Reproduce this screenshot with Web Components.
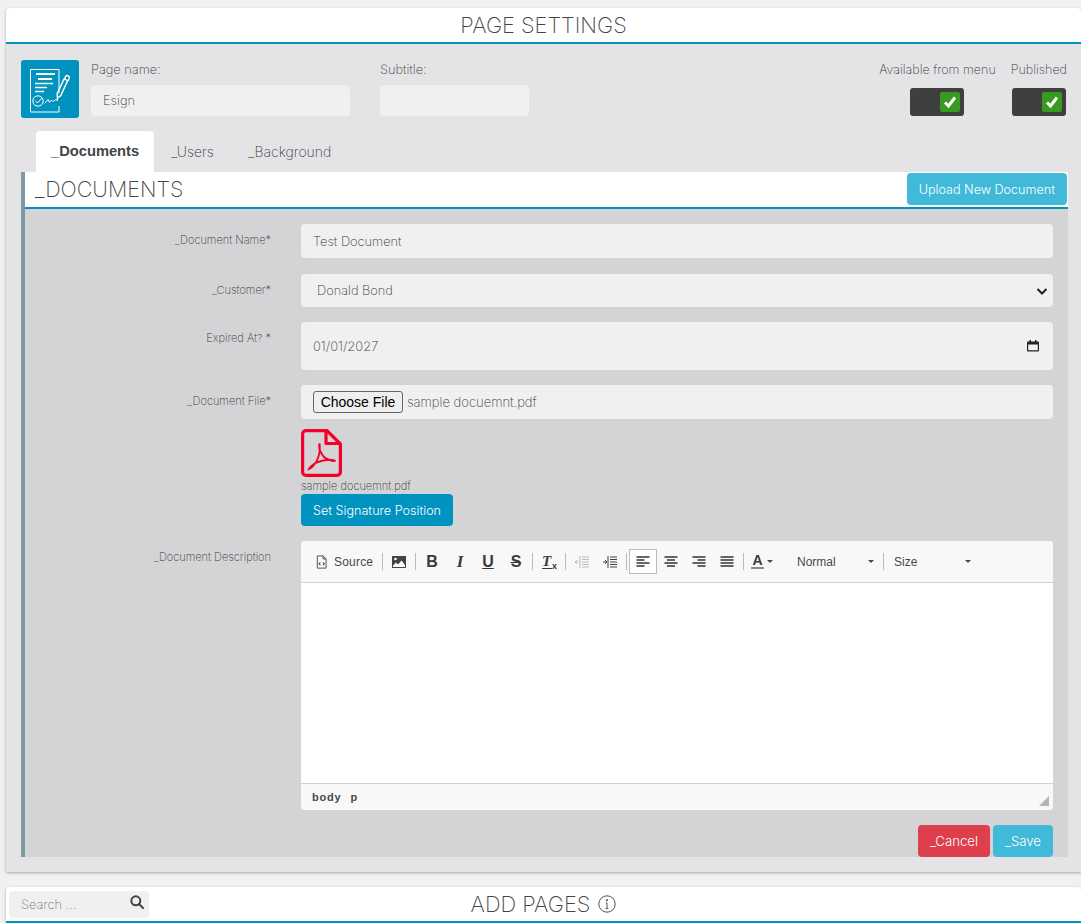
<!DOCTYPE html>
<html lang="en">
<head>
<meta charset="utf-8">
<title>Page Settings</title>
<style>
  html, body { margin: 0; height: 923px; overflow: hidden; background: #f1f1f1; }
  body {
    padding: 8px 0 0 6px;
    box-sizing: border-box;
    font-family: Inter, "Liberation Sans", sans-serif;
    font-weight: 250;
    color: #3a3a3a;
    font-size: 12.8px;
  }
</style>
</head>
<body>
  <app-card title="PAGE SETTINGS">
    <settings-head>
      <labeled-box slot="name" label="Page name:"><text-field>Esign</text-field></labeled-box>
      <labeled-box slot="subtitle" label="Subtitle:"><text-field></text-field></labeled-box>
      <toggle-check slot="toggles" label="Available from menu"></toggle-check>
      <toggle-check slot="toggles" label="Published"></toggle-check>
    </settings-head>
    <tab-bar tabs="_Documents,_Users,_Background"></tab-bar>
    <doc-panel title="_DOCUMENTS" action="Upload New Document">
      <form-row label="_Document Name*" style="margin-bottom:16px"><text-field high="34">Test Document</text-field></form-row>
      <form-row label="_Customer*"><select-field>Donald Bond</select-field></form-row>
      <form-row label="Expired At? *"><date-field>01/01/2027</date-field></form-row>
      <form-row label="_Document File*">
        <file-field>sample docuemnt.pdf</file-field>
        <pdf-thumb name="sample docuemnt.pdf"></pdf-thumb>
        <app-button color="#0093bf">Set Signature Position</app-button>
      </form-row>
      <form-row label="_Document Description"><rich-editor></rich-editor></form-row>
      <form-actions>
        <app-button color="#dd404c">_Cancel</app-button>
        <app-button color="#41b9d8">_Save</app-button>
      </form-actions>
    </doc-panel>
  </app-card>

  <app-card title="ADD PAGES" info>
    <search-box slot="start">Search ...</search-box>
  </app-card>

<script>
const BLUE = '#0093bf';

class AppCard extends HTMLElement {
  connectedCallback() {
    const root = this.attachShadow({ mode: 'open' });
    const info = this.hasAttribute('info') ? `
      <svg class="info" width="18" height="18" viewBox="0 0 18 18" fill="none" stroke="#555">
        <circle cx="9" cy="9" r="8.2"/>
        <path d="M9 7.8v5.6M7.6 13.4h2.8M7.8 7.8H9" />
        <circle cx="9" cy="5.2" r=".7" fill="#555"/>
      </svg>` : '';
    root.innerHTML = `
      <style>
        :host { display: block; margin-bottom: 15px; background: #e4e4e7; border-radius: 4px 4px 0 0; box-shadow: 0 1px 3px rgba(0,0,0,.3); }
        header {
          display: grid;
          grid-template-columns: 1fr auto 1fr;
          align-items: center;
          height: 34px;
          background: #fff;
          border-bottom: 2px solid ${BLUE};
          border-radius: 4px 4px 0 0;
        }
        .start { padding-left: 3px; }
        h1 { margin: 0; display: flex; align-items: center; gap: 8px; font-size: 21.800px; font-weight: 200; color: #444; }
        main { display: block; padding: 16px 13px 15px 15px; }
        main.empty { display: none; }
      </style>
      <header>
        <div class="start"><slot name="start"></slot></div>
        <h1>${this.getAttribute('title')}${info}</h1>
      </header>
      <main class="${this.hasAttribute('info') ? 'empty' : ''}"><slot></slot></main>
    `;
  }
}

class SettingsHead extends HTMLElement {
  connectedCallback() {
    const root = this.attachShadow({ mode: 'open' });
    root.innerHTML = `
      <style>
        :host { display: flex; height: 58px; }
        .logo { width: 58px; height: 58px; background: ${BLUE}; border-radius: 3px; margin-right: 12px; flex: none; }
        .name { width: 259px; margin-right: 30px; }
        .subtitle { width: 149px; }
        .toggles { margin-left: auto; display: flex; gap: 15px; margin-right: 1px; }
      </style>
      <svg class="logo" viewBox="0 0 58 58" fill="none" stroke="#fff" stroke-width="1">
        <path d="M38 33V9.5H9.5v42.5H38v-6" />
        <path d="M15 14h19M17 19h14" stroke-width="2"/>
        <path d="M14 23.5h18M14 27.5h12M14 31.5h9" stroke-width="1.3"/>
        <circle cx="17" cy="41" r="5.2"/>
        <path d="M14.5 41l2 2 4-4.5M24 43l3-3.5 1.5 3 2-2.5 1.5 1.5 3-2" stroke-linecap="round"/>
        <path d="M36.5 38l3.2-2.4 7-15-3.6-1.7-7 15zM43.6 18.9l1-2.300a2 2 0 0 1 3.600 1.700l-1 2.300M36.500 38l-.4 3" stroke-width="1.400" stroke-linejoin="round"/>
      </svg>
      <div class="name"><slot name="name"></slot></div>
      <div class="subtitle"><slot name="subtitle"></slot></div>
      <div class="toggles"><slot name="toggles"></slot></div>
    `;
  }
}

class LabeledBox extends HTMLElement {
  connectedCallback() {
    const root = this.attachShadow({ mode: 'open' });
    root.innerHTML = `
      <style>
        :host { display: block; }
        label { display: block; line-height: 18px; padding-top: 1px; margin-bottom: 6px; }
      </style>
      <label>${this.getAttribute('label')}</label>
      <slot></slot>
    `;
  }
}

class TextField extends HTMLElement {
  connectedCallback() {
    const root = this.attachShadow({ mode: 'open' });
    const high = this.getAttribute('high') || 31;
    root.innerHTML = `
      <style>
        :host { display: flex; align-items: center; height: ${high}px; padding: 0 12px; background: #f0f0f0; border-radius: 4px; }
      </style>
      <slot></slot>
    `;
  }
}

class ToggleCheck extends HTMLElement {
  connectedCallback() {
    const root = this.attachShadow({ mode: 'open' });
    root.innerHTML = `
      <style>
        :host { display: flex; flex-direction: column; align-items: center; }
        span { line-height: 18px; padding-top: 1px; font-size: 12.500px; }
        .track { width: 54px; height: 28px; margin-top: 9px; box-sizing: border-box; padding: 4px; background: #3f3f3f; border-radius: 3px; display: flex; justify-content: flex-end; }
        .box { width: 20px; height: 20px; background: #389a20; border-radius: 2px; }
      </style>
      <span>${this.getAttribute('label')}</span>
      <div class="track">
        <svg class="box" viewBox="0 0 20 20" fill="none" stroke="#fff" stroke-width="3">
          <path d="M5 10.500l3.500 3.500 6.500-8.500"/>
        </svg>
      </div>
    `;
  }
}

class TabBar extends HTMLElement {
  connectedCallback() {
    const root = this.attachShadow({ mode: 'open' });
    const tabs = this.getAttribute('tabs').split(',');
    root.innerHTML = `
      <style>
        :host { display: flex; margin: 13px 0 0 15px; height: 41px; }
        a { padding: 0 17px 1px; display: flex; align-items: center; font-size: 14px; color: #3a3a3a; }
        a.active { background: #fff; border-radius: 4px 4px 0 0; font: 700 14.700px "Liberation Sans", sans-serif; padding: 0 15px 2px; color: #444; }
      </style>
      ${tabs.map((t, i) => `<a class="${i === 0 ? 'active' : ''}">${t}</a>`).join('')}
    `;
  }
}

class DocPanel extends HTMLElement {
  connectedCallback() {
    const root = this.attachShadow({ mode: 'open' });
    root.innerHTML = `
      <style>
        :host { display: block; background: #d4d4d6; border-left: 4px solid #7d9aa5; }
        header { display: flex; justify-content: space-between; align-items: flex-start; height: 37px; padding: 1px 1px 0 10px; box-sizing: border-box; background: #fff; border-bottom: 2px solid ${BLUE}; }
        h2 { margin: 0; font-size: 21.500px; line-height: 32px; font-weight: 200; color: #444; }
        .body { padding-top: 15px; }
      </style>
      <header>
        <h2>${this.getAttribute('title')}</h2>
        <app-button color="#41b9d8">${this.getAttribute('action')}</app-button>
      </header>
      <div class="body"><slot></slot></div>
    `;
  }
}

class FormRow extends HTMLElement {
  connectedCallback() {
    const root = this.attachShadow({ mode: 'open' });
    root.innerHTML = `
      <style>
        :host { display: grid; grid-template-columns: 246px 752px; column-gap: 30px; margin-bottom: 15px; }
        label { text-align: right; font-size: 11px; line-height: 14px; padding-top: 9px; }
        .field { display: flex; flex-direction: column; align-items: stretch; }
        ::slotted(app-button) { align-self: flex-start; }
      </style>
      <label>${this.getAttribute('label')}</label>
      <div class="field"><slot></slot></div>
    `;
  }
}

class SelectField extends HTMLElement {
  connectedCallback() {
    const root = this.attachShadow({ mode: 'open' });
    root.innerHTML = `
      <style>
        :host { display: flex; align-items: center; justify-content: space-between; height: 33px; padding: 0 5px 0 16px; background: #f0f0f0; border-radius: 4px; }
      </style>
      <slot></slot>
      <svg width="12" height="12" viewBox="0 0 12 12" fill="none" stroke="#222" stroke-width="2"><path d="M1.500 4l4.500 4.500L10.500 4"/></svg>
    `;
  }
}

class DateField extends HTMLElement {
  connectedCallback() {
    const root = this.attachShadow({ mode: 'open' });
    root.innerHTML = `
      <style>
        :host { display: flex; align-items: center; justify-content: space-between; height: 48px; padding: 0 14px 0 12px; background: #f0f0f0; border-radius: 4px; font-size: 13px; }
      </style>
      <slot></slot>
      <svg width="12" height="12" viewBox="0 0 12 12"><path fill="#222" d="M1 1.500h10a1 1 0 0 1 1 1v8a1 1 0 0 1-1 1H1a1 1 0 0 1-1-1v-8a1 1 0 0 1 1-1zM1.200 4.500v5.800h9.600V4.500z"/><path fill="#222" d="M2.500 0h1.500v2H2.500zM8 0h1.500v2H8z"/></svg>
    `;
  }
}

class FileField extends HTMLElement {
  connectedCallback() {
    const root = this.attachShadow({ mode: 'open' });
    root.innerHTML = `
      <style>
        :host { display: flex; align-items: center; gap: 4px; height: 34px; padding-left: 12px; background: #f0f0f0; border-radius: 4px; font-size: 13px; }
        button { width: 90px; height: 22px; padding: 0; background: #efefef; border: 1px solid #666; border-radius: 3px; font: 400 14px "Liberation Sans", sans-serif; color: #000; }
      </style>
      <button type="button">Choose File</button>
      <span><slot></slot></span>
    `;
  }
}

class PdfThumb extends HTMLElement {
  connectedCallback() {
    const root = this.attachShadow({ mode: 'open' });
    root.innerHTML = `
      <style>
        :host { display: block; padding-top: 10px; }
        svg { display: block; }
        div { font-size: 11px; line-height: 14px; margin: 2px 0 1px; }
      </style>
      <svg width="41" height="48" viewBox="0 0 41 48" fill="none" stroke="#f5002a">
        <path stroke-width="3.200" stroke-linejoin="round" d="M5 1.600H26L39.400 15V43a3.400 3.400 0 0 1-3.400 3.400H5A3.400 3.400 0 0 1 1.600 43V5A3.400 3.400 0 0 1 5 1.600zM25 2v12.500H39"/>
        <path stroke-width="1.900" d="M18.500 14.500c-1.500 4 1 9 4 13 3 3 8 4.500 12 4.500-6-2.500-14-.5-19 1.500-3 1.500-6.500 4.500-7.500 6.500 3.500-1 7.500-7 9-11 1.500-4 2.200-9.500 1.500-14.500z"/>
      </svg>
      <div>${this.getAttribute('name')}</div>
    `;
  }
}

class AppButton extends HTMLElement {
  connectedCallback() {
    const root = this.attachShadow({ mode: 'open' });
    root.innerHTML = `
      <style>
        :host { display: inline-flex; align-items: center; justify-content: center; height: 32px; padding: 0 12px; background: ${this.getAttribute('color')}; border-radius: 4px; color: #fff; font-size: var(--btn-size, 12.600px); font-weight: 300; box-sizing: border-box; }
      </style>
      <slot></slot>
    `;
  }
}

class FormActions extends HTMLElement {
  connectedCallback() {
    const root = this.attachShadow({ mode: 'open' });
    root.innerHTML = `
      <style>
        :host { display: flex; justify-content: flex-end; gap: 3px; padding-right: 15px; --btn-size: 13.200px; }
      </style>
      <slot></slot>
    `;
  }
}

// iconos de la barra, 16x16
const TOOL_ICONS = {
  source: '<path fill="none" stroke="#444" d="M1.500 1h6.500l3.500 3.500V15h-10zM8 1v3.500h3.500"/><path fill="none" stroke="#444" stroke-width="1.200" d="M5 8.500L3.500 10 5 11.500M8 8.500L9.500 10 8 11.500"/>',
  image: '<path fill="#444" d="M1 2h14v12H1z"/><path fill="#fff" d="M2 11.500l3-3 2 2 3.500-4 3.500 4.500V13H2z"/><circle cx="4.500" cy="5" r="1.300" fill="#fff"/>',
  outdent: '<path fill="none" stroke="#bbb" d="M8 3h7M8 5.500h7M8 8h7M8 10.500h7M8 13h7M6 2v12M1 8h4M3 6L1 8l2 2"/>',
  indent: '<path fill="none" stroke="#444" d="M8 3h7M8 5.500h7M8 8h7M8 10.500h7M8 13h7M6 2v12M1 8h3M3 6l2 2-2 2"/>',
  left: '<path fill="none" stroke="#333" stroke-width="1.500" d="M1.500 3h13M1.500 6h8M1.500 9h13M1.500 12h8"/>',
  center: '<path fill="none" stroke="#333" stroke-width="1.500" d="M1.500 3h13M4 6h8M1.500 9h13M4 12h8"/>',
  right: '<path fill="none" stroke="#333" stroke-width="1.500" d="M1.500 3h13M6.500 6h8M1.500 9h13M6.500 12h8"/>',
  justify: '<path fill="none" stroke="#333" stroke-width="1.500" d="M1.500 3h13M1.500 6h13M1.500 9h13M1.500 12h13"/>',
};

const icon = name => `<svg width="16" height="16" viewBox="0 0 16 16">${TOOL_ICONS[name]}</svg>`;
const caret = '<i class="caret"></i>';

class RichEditor extends HTMLElement {
  connectedCallback() {
    const root = this.attachShadow({ mode: 'open' });
    root.innerHTML = `
      <style>
        :host { display: flex; flex-direction: column; height: 269px; background: #fff; border-radius: 4px; font-family: "Liberation Sans", sans-serif; font-weight: 400; color: #484848; overflow: hidden; }
        .bar { display: flex; align-items: center; height: 41px; padding-left: 12px; background: #f8f8f8; border-bottom: 1px solid #d1d1d1; font-size: 12px; flex: none; }
        .btn { width: 28px; height: 25px; box-sizing: border-box; display: flex; align-items: center; justify-content: center; flex: none; font-size: 16px; font-weight: 700; color: #3a3a3a; }
        .btn.on { background: #fff; border: 1px solid #bcbcbc; }
        .btn em, .tx { font-family: "Liberation Serif", serif; font-style: italic; font-weight: 700; font-size: 17px; }
        .src { width: 67px; justify-content: flex-start; padding-left: 3px; gap: 4px; font-size: 12px; font-weight: 400; color: #484848; letter-spacing: .2px; }
        .sep { width: 1px; height: 17px; margin: 0 2px; background: #bcbcbc; flex: none; }
        .tx { position: relative; border-bottom: 1px solid #3a3a3a; line-height: 13px; padding-right: 1px; font-size: 15px; margin-left: -4px; }
        .tx sub { position: absolute; right: -5px; top: 7px; font: 700 9px "Liberation Sans", sans-serif; line-height: 9px; }
        .color { width: 32px; gap: 3px; }
        .color b { font-size: 14px; line-height: 13px; border-bottom: 2px solid #888; padding: 0 1px; }
        .caret { display: inline-block; width: 0; height: 0; border: 3px solid transparent; border-top-color: #484848; border-bottom: 0; }
        .combo { display: flex; align-items: center; justify-content: space-between; box-sizing: border-box; height: 25px; flex: none; font-size: 12px; }
        .normal { width: 96px; margin-left: 7px; padding: 0 7px 0 12px; }
        .size { width: 92px; padding: 0 7px 0 8px; }
        .content { flex: 1; }
        .foot { position: relative; height: 26px; flex: none; display: flex; align-items: center; gap: 9px; padding-left: 11px; background: #f8f8f8; border-top: 1px solid #d1d1d1; font-size: 11px; font-weight: 700; letter-spacing: .8px; }
        .grip { position: absolute; right: 4px; bottom: 4px; width: 0; height: 0; border-style: solid; border-width: 0 0 10px 10px; border-color: transparent transparent #b5b5b5 transparent; }
      </style>
      <div class="bar">
        <span class="btn src">${icon('source').replace('width="16"', 'width="14"').replace('height="16"', 'height="14"')}Source</span><span class="sep"></span>
        <span class="btn">${icon('image')}</span><span class="sep"></span>
        <span class="btn">B</span>
        <span class="btn"><em>I</em></span>
        <span class="btn"><u>U</u></span>
        <span class="btn"><s>S</s></span><span class="sep"></span>
        <span class="btn"><span class="tx">T<sub>x</sub></span></span><span class="sep"></span>
        <span class="btn">${icon('outdent')}</span>
        <span class="btn">${icon('indent')}</span><span class="sep"></span>
        <span class="btn on">${icon('left')}</span>
        <span class="btn">${icon('center')}</span>
        <span class="btn">${icon('right')}</span>
        <span class="btn">${icon('justify')}</span><span class="sep"></span>
        <span class="btn color"><b>A</b>${caret}</span>
        <span class="combo normal">Normal${caret}</span><span class="sep"></span>
        <span class="combo size">Size${caret}</span>
      </div>
      <div class="content"></div>
      <div class="foot"><span>body</span><span>p</span><i class="grip"></i></div>
    `;
  }
}

class SearchBox extends HTMLElement {
  connectedCallback() {
    const root = this.attachShadow({ mode: 'open' });
    root.innerHTML = `
      <style>
        :host { display: flex; align-items: center; justify-content: space-between; width: 140px; height: 27px; box-sizing: border-box; padding: 0 5px 0 12px; background: #f0f0f0; border-radius: 4px; color: #777; }
      </style>
      <slot></slot>
      <svg width="14" height="14" viewBox="0 0 14 14" fill="none" stroke="#444" stroke-width="2" style="margin-top:-5px"><circle cx="5.800" cy="5.800" r="4.500"/><path d="M9 9l4 4" stroke-linecap="round"/></svg>
    `;
  }
}

customElements.define('app-card', AppCard);
customElements.define('settings-head', SettingsHead);
customElements.define('labeled-box', LabeledBox);
customElements.define('text-field', TextField);
customElements.define('toggle-check', ToggleCheck);
customElements.define('tab-bar', TabBar);
customElements.define('doc-panel', DocPanel);
customElements.define('form-row', FormRow);
customElements.define('select-field', SelectField);
customElements.define('date-field', DateField);
customElements.define('file-field', FileField);
customElements.define('pdf-thumb', PdfThumb);
customElements.define('app-button', AppButton);
customElements.define('form-actions', FormActions);
customElements.define('rich-editor', RichEditor);
customElements.define('search-box', SearchBox);
</script>
</body>
</html>
